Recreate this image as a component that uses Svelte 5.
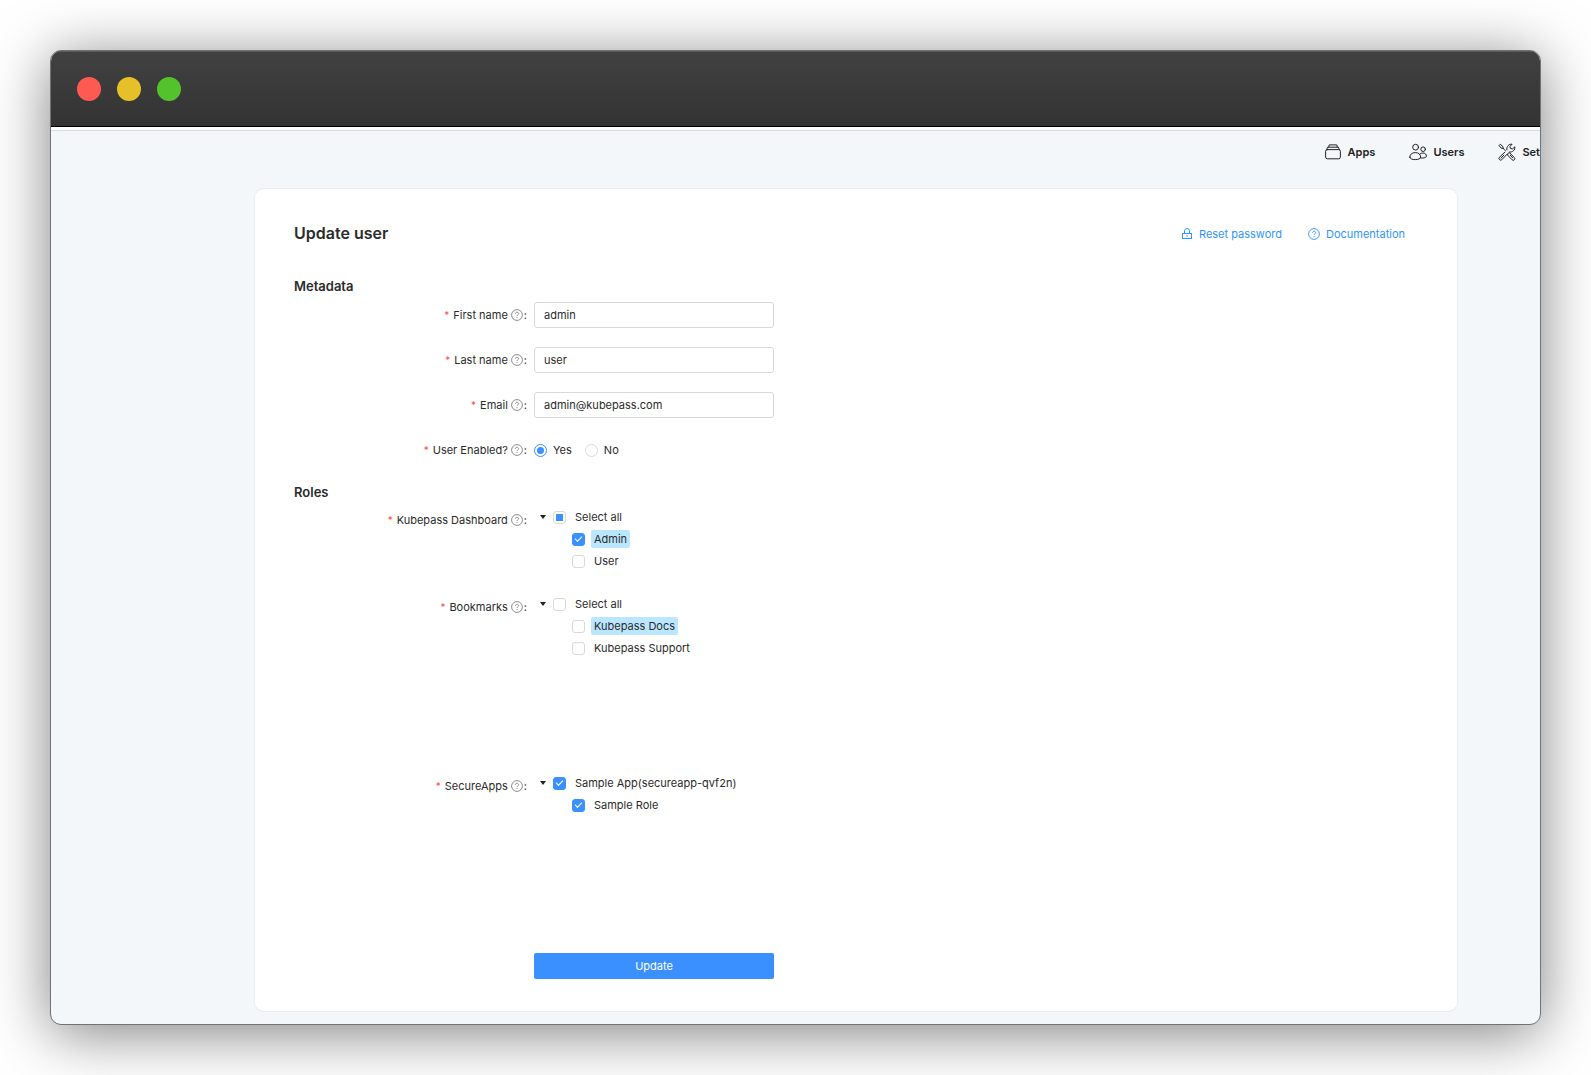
<script>
	let user = $state({
		firstName: 'admin',
		lastName: 'user',
		email: 'admin@kubepass.com',
		enabled: 'yes'
	});

	const textFields = [
		{ key: 'firstName', label: 'First name', type: 'text' },
		{ key: 'lastName', label: 'Last name', type: 'text' },
		{ key: 'email', label: 'Email', type: 'email' }
	];

	let roleGroups = $state([
		{
			id: 'dashboard',
			label: 'Kubepass Dashboard',
			title: 'Select all',
			open: true,
			roles: [
				{ name: 'Admin', checked: true, selected: true },
				{ name: 'User', checked: false, selected: false }
			]
		},
		{
			id: 'bookmarks',
			label: 'Bookmarks',
			title: 'Select all',
			open: true,
			roles: [
				{ name: 'Kubepass Docs', checked: false, selected: true },
				{ name: 'Kubepass Support', checked: false, selected: false }
			]
		},
		{
			id: 'secureapps',
			label: 'SecureApps',
			title: 'Sample App(secureapp-qvf2n)',
			open: true,
			roles: [{ name: 'Sample Role', checked: true, selected: false }]
		}
	]);

	const allChecked = (group) => group.roles.every((role) => role.checked);
	const someChecked = (group) => group.roles.some((role) => role.checked);

	function toggleAll(group) {
		const next = !allChecked(group);
		group.roles.forEach((role) => (role.checked = next));
	}
</script>

{#snippet question()}
	<svg class="question" viewBox="0 0 12 12" fill="none" stroke="currentColor" aria-hidden="true">
		<circle cx="6" cy="6" r="5.4" stroke-width="0.9" />
		<path d="M4.4 4.9C4.4 3.9 5.1 3.3 6 3.3s1.6.6 1.6 1.4c0 1.1-1.6 1.1-1.6 2.3" stroke-width="0.9" />
		<circle cx="6" cy="8.5" r="0.55" fill="currentColor" stroke="none" />
	</svg>
{/snippet}

{#snippet fieldLabel(text)}
	<span class="required">*</span>
	<span>{text}</span>
	{@render question()}<span>:</span>
{/snippet}

<div class="stage">
	<div class="window">
		<div class="titlebar">
			<span class="dot red"></span>
			<span class="dot yellow"></span>
			<span class="dot green"></span>
		</div>

		<div class="page">
			<nav>
				<a href="#apps">
					<svg viewBox="0 0 18 18" fill="none" stroke="currentColor" stroke-linejoin="round" stroke-linecap="round">
						<rect x="1.6" y="6.6" width="14.8" height="9.2" rx="1.7" />
						<path d="M2.7 6.5 3.6 4.2h10.8l.9 2.3M4.7 4.1l.5-2.2h7.6l.5 2.2" />
					</svg>
					Apps
				</a>
				<a href="#users">
					<svg viewBox="0 0 18 18" fill="none" stroke="currentColor" stroke-linejoin="round" stroke-linecap="round">
						<circle cx="6.6" cy="4.2" r="2.9" />
						<circle cx="14.1" cy="6.2" r="2.3" />
						<path d="M.8 14.2c0-3 2.5-4.6 5.5-4.6s5.3 1.6 5.3 4.4c0 1.7-2.3 2.6-5.3 2.6s-5.5-.8-5.5-2.4z" />
						<path d="M11 10.9c.8-.6 1.8-.9 2.9-.9 2.1 0 3.5 1.3 3.5 3.2 0 1.1-1.7 1.8-3.6 1.8h-2.2" />
					</svg>
					Users
				</a>
				<a href="#settings">
					<svg viewBox="0 0 18 18" fill="none" stroke="currentColor" stroke-linejoin="round" stroke-linecap="round">
						<path d="M7.6 7.9 5.2 5.5 4.9 3.6 2.3 1.2 1 2.5l2.3 2.7 1.9.3M10.7 10.1l1-.1 4.7 4.5a1.6 1.6 0 0 1-2.3 2.3l-4.5-4.7.1-1.1z" />
						<path d="M6.7 9.3 1.4 14.3a1.7 1.7 0 0 0 2.4 2.4l5.1-5.3M8.9 6.9c-.6-3.2 1.7-6.1 5.2-5.7L12 3.4l.4 2.1 2.2.4 2.2-2.1c.5 3.2-2.1 5.7-5.6 5.3" />
						<path d="m3 15.1 2.8-2.9M12.3 12.3l2.5 2.6" />
					</svg>
					Set
				</a>
			</nav>

			<main class="card">
				<header>
					<h1>Update user</h1>
					<div class="actions">
						<a href="#reset">
							<svg viewBox="0 0 12 12" fill="none" stroke="currentColor" aria-hidden="true">
								<rect x="1.5" y="5.5" width="9" height="5" />
								<path d="M3.5 5.5V2.7C3.5 1.5 4.5.6 6 .6s2.5.9 2.5 2.1v2.8M6 7.2v1.6" />
							</svg>
							Reset password
						</a>
						<a href="#docs">
							{@render question()}
							Documentation
						</a>
					</div>
				</header>

				<form onsubmit={(e) => e.preventDefault()}>
					<h2>Metadata</h2>
					{#each textFields as field}
						<div class="row">
							<label class="label" for={field.key}>{@render fieldLabel(field.label)}</label>
							<input class="text" id={field.key} type={field.type} bind:value={user[field.key]} />
						</div>
					{/each}
					<div class="row" role="radiogroup" aria-labelledby="enabled-label">
						<span class="label" id="enabled-label">{@render fieldLabel('User Enabled?')}</span>
						<div class="radios">
							<label><input type="radio" value="yes" bind:group={user.enabled} />Yes</label>
							<label><input type="radio" value="no" bind:group={user.enabled} />No</label>
						</div>
					</div>

					<h2 class="roles-title">Roles</h2>
					{#each roleGroups as group}
						<div class="group {group.id}" role="group" aria-labelledby="{group.id}-label">
							<span class="label" id="{group.id}-label">{@render fieldLabel(group.label)}</span>
							<div class="tree">
								<div class="node">
									<button
										type="button"
										class="switcher"
										class:closed={!group.open}
										aria-label="Toggle {group.label}"
										onclick={() => (group.open = !group.open)}
									></button>
									<label>
										<input
											type="checkbox"
											checked={allChecked(group)}
											indeterminate={someChecked(group) && !allChecked(group)}
											onchange={() => toggleAll(group)}
										/>
										<span class="title">{group.title}</span>
									</label>
								</div>
								{#if group.open}
									{#each group.roles as role}
										<div class="node child">
											<label>
												<input type="checkbox" bind:checked={role.checked} />
												<span class="title" class:selected={role.selected}>{role.name}</span>
											</label>
										</div>
									{/each}
								{/if}
							</div>
						</div>
					{/each}

					<div class="submit">
						<button type="submit">Update</button>
					</div>
				</form>
			</main>
		</div>
	</div>
</div>

<style>
	:global(body) {
		margin: 0;
		background: #fff;
	}

	.stage {
		box-sizing: border-box;
		min-height: 100vh;
		padding: 50px;
		overflow: hidden;
		font-family: Inter, 'Liberation Sans', sans-serif;
		font-size: 11px;
		line-height: 18px;
		color: #2b2b2b;
	}

	.window {
		border: 1px solid #707274;
		border-radius: 11px;
		overflow: hidden;
		background: #f3f7fa;
		box-shadow: 0 8px 60px rgba(0, 0, 0, 0.5);
	}

	.titlebar {
		display: flex;
		align-items: center;
		gap: 16px;
		height: 75px;
		padding: 0 26px;
		background: linear-gradient(#414141, #333);
		border-bottom: 1px solid #000;
		box-shadow: inset 0 1px #5c5c5c;
	}

	.dot {
		width: 24px;
		height: 24px;
		border-radius: 50%;
	}

	.red {
		background: #ff5a52;
	}

	.yellow {
		background: #e6c029;
	}

	.green {
		background: #54c22c;
	}

	.page {
		padding-bottom: 12px;
		border-top: 3px solid #fff;
		box-shadow: inset 0 1px #d9dcde;
	}

	nav {
		display: flex;
		justify-content: flex-end;
		gap: 34px;
		height: 58px;
		box-sizing: border-box;
		padding-top: 13px;
	}

	nav a {
		display: flex;
		align-items: center;
		gap: 6px;
		height: 18px;
		color: #222;
		font-weight: 600;
		text-decoration: none;
	}

	nav svg {
		width: 18px;
		height: 18px;
	}

	.card {
		margin: 0 82px 0 203px;
		padding: 34px 52px 32px 39px;
		border: 1px solid #e9ecef;
		border-radius: 10px;
		background: #fff;
	}

	header {
		display: flex;
		align-items: flex-start;
		justify-content: space-between;
		height: 22px;
		margin-bottom: 31px;
	}

	h1 {
		margin: 0;
		font-size: 16px;
		font-weight: 600;
		line-height: 20px;
	}

	h2 {
		margin: 0 0 6px;
		font-size: 13px;
		font-weight: 600;
		line-height: 20px;
	}

	.actions {
		display: flex;
		gap: 26px;
		line-height: 22px;
	}

	.actions a {
		display: flex;
		align-items: center;
		gap: 6px;
		color: #2f95fb;
		text-decoration: none;
	}

	.actions svg {
		width: 12px;
		height: 12px;
		color: #2f95fb;
	}

	.row {
		display: flex;
		align-items: center;
		gap: 7px;
		height: 26px;
		margin-bottom: 19px;
	}

	.label {
		display: flex;
		align-items: center;
		justify-content: flex-end;
		width: 233px;
	}

	.required {
		margin-right: 4px;
		color: #ff4d4f;
		font-size: 10px;
	}

	.question {
		width: 12px;
		height: 12px;
		margin: 0 1px 0 3px;
		color: #808080;
	}

	.actions .question {
		margin: 0;
	}

	input,
	button {
		box-sizing: border-box;
		margin: 0;
		font: inherit;
		color: inherit;
	}

	.text {
		width: 240px;
		height: 26px;
		padding: 0 9px;
		border: 1px solid #d9d9d9;
		border-radius: 3px;
		background: #fff;
	}

	.text:focus {
		outline: none;
		border-color: #3a90ff;
	}

	.radios {
		display: flex;
		gap: 13px;
	}

	.radios label {
		display: flex;
		align-items: center;
		gap: 6px;
	}

	input[type='radio'],
	input[type='checkbox'] {
		display: grid;
		place-content: center;
		width: 13px;
		height: 13px;
		appearance: none;
		border: 1px solid #d9d9d9;
		border-radius: 3px;
		background: #fff;
	}

	input[type='radio'] {
		border-radius: 50%;
	}

	input[type='radio']:checked {
		border-color: #3a90ff;
	}

	input[type='radio']:checked::after {
		content: '';
		width: 7px;
		height: 7px;
		border-radius: 50%;
		background: #3a90ff;
	}

	input[type='checkbox']:checked {
		border-color: #3a90ff;
		background: #3a90ff;
	}

	input[type='checkbox']:checked::after {
		content: '';
		width: 7px;
		height: 4px;
		box-sizing: border-box;
		border: solid #fff;
		border-width: 0 0 1px 1px;
		transform: translateY(-1px) rotate(-45deg);
	}

	input[type='checkbox']:indeterminate::after {
		content: '';
		width: 7px;
		height: 7px;
		background: #3a90ff;
	}

	.roles-title {
		margin-top: 1px;
		margin-bottom: 4px;
	}

	.group {
		display: flex;
		align-items: flex-start;
		gap: 7px;
		min-height: 87px;
	}

	.group > .label {
		height: 28px;
	}

	.bookmarks {
		min-height: 179px;
	}

	.secureapps {
		min-height: 181px;
	}

	.node {
		display: flex;
		align-items: center;
		height: 22px;
	}

	.node.child {
		padding-left: 38px;
	}

	.node label {
		display: flex;
		align-items: center;
		gap: 6px;
	}

	.switcher {
		width: 19px;
		height: 18px;
		padding: 0 6px;
		border: none;
		background: none;
	}

	.switcher::before {
		content: '';
		display: block;
		width: 0;
		border: 3px solid transparent;
		border-top: 4px solid #222;
		border-bottom: none;
	}

	.switcher.closed::before {
		transform: rotate(-90deg);
	}

	.title {
		padding: 0 3px;
		border-radius: 2px;
	}

	.title.selected {
		background: #bae7ff;
	}

	.submit {
		padding-left: 240px;
	}

	.submit button {
		display: block;
		width: 240px;
		height: 26px;
		border: none;
		border-radius: 2px;
		background: #3a90ff;
		color: #fff;
	}
</style>
